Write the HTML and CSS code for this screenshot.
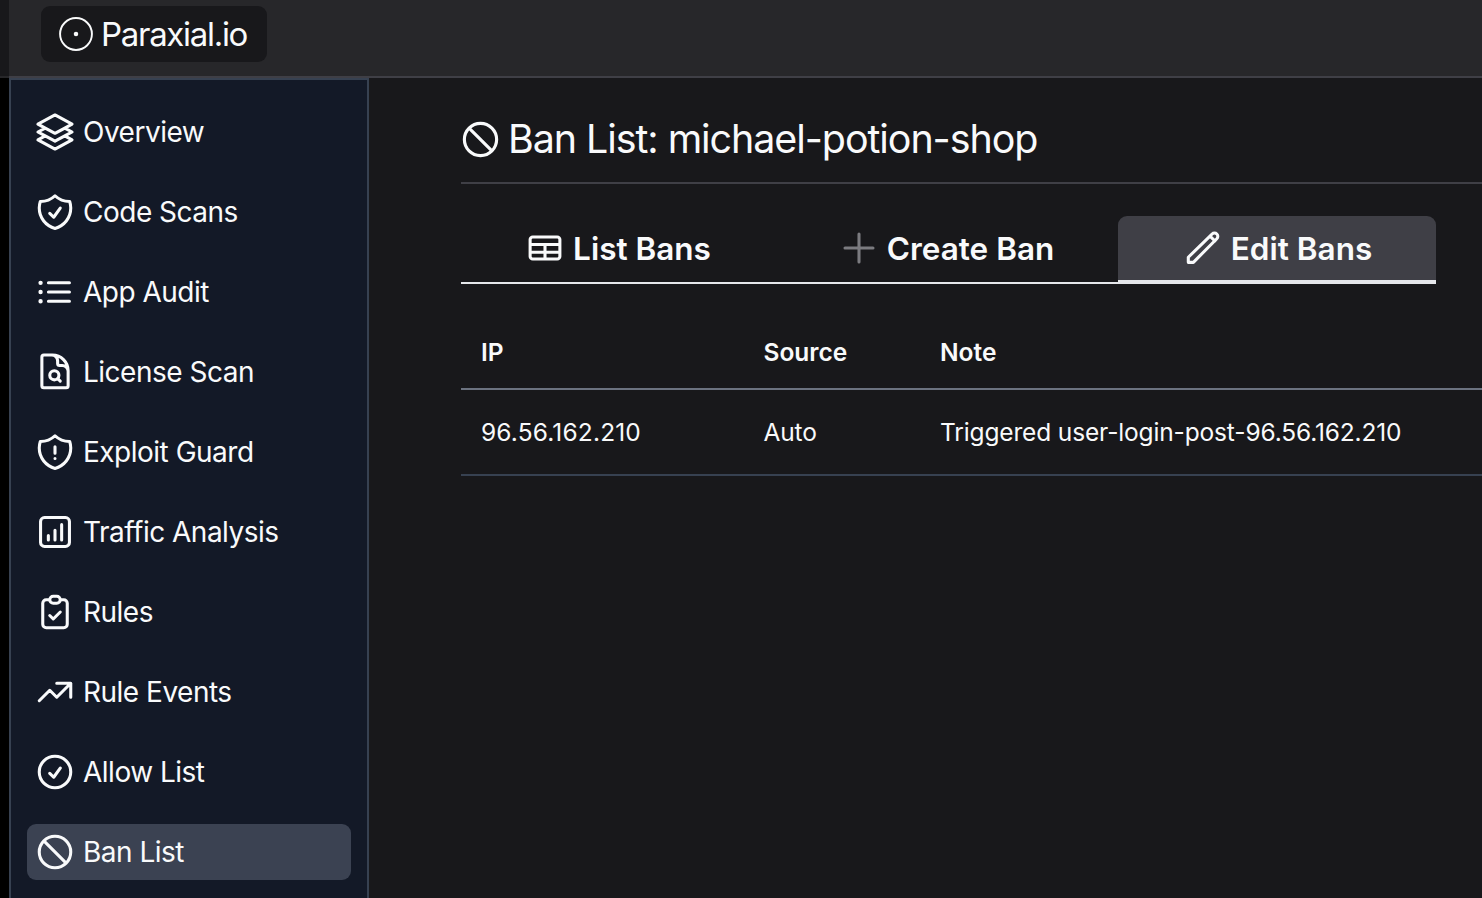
FILE: index.html
```html
<!DOCTYPE html>
<html lang="en">
<head>
<meta charset="utf-8">
<title>Ban List: michael-potion-shop</title>
<link rel="stylesheet" href="styles.css">
</head>
<body>
<header class="topbar">
  <div class="topbar-strip"></div>
  <div class="topbar-main">
    <a class="logo" href="#">
      <svg class="icon" viewBox="0 0 24 24"><circle cx="12" cy="12" r="9.1" fill="none" stroke="currentColor" stroke-width="1.1"/><circle cx="12" cy="12" r="1.3" fill="currentColor" stroke="none"/></svg>
      <span class="logo-text">Paraxial.io</span>
    </a>
  </div>
</header>
<div class="shell">
  <div class="gutter"></div>
  <nav class="sidebar">
    <a class="nav-item" href="#"><svg class="icon" viewBox="0 0 24 24"><path d="M6.429 9.75L2.25 12l4.179 2.25m0-4.5l5.571 3 5.571-3m-11.142 0L2.25 7.5 12 2.25l9.75 5.25-4.179 2.25m0 0L21.75 12l-4.179 2.25m0 0l4.179 2.25L12 21.75 2.25 16.5l4.179-2.25m11.142 0l-5.571 3-5.571-3"/></svg><span>Overview</span></a>
    <a class="nav-item" href="#"><svg class="icon" viewBox="0 0 24 24"><path d="M9 12.75L11.25 15 15 9.75m-3-7.036A11.959 11.959 0 013.598 6 11.99 11.99 0 003 9.749c0 5.592 3.824 10.29 9 11.623 5.176-1.332 9-6.03 9-11.622 0-1.31-.21-2.571-.598-3.751h-.152c-3.196 0-6.1-1.248-8.25-3.285z"/></svg><span>Code Scans</span></a>
    <a class="nav-item" href="#"><svg class="icon" viewBox="0 0 24 24"><path d="M8.25 6.75h12M8.25 12h12m-12 5.25h12M3.75 6.75h.007v.008H3.75V6.75zm.375 0a.375.375 0 11-.75 0 .375.375 0 01.75 0zM3.75 12h.007v.008H3.75V12zm.375 0a.375.375 0 11-.75 0 .375.375 0 01.75 0zm-.375 5.25h.007v.008H3.75v-.008zm.375 0a.375.375 0 11-.75 0 .375.375 0 01.75 0z"/></svg><span>App Audit</span></a>
    <a class="nav-item" href="#"><svg class="icon" viewBox="0 0 24 24"><path d="M19.5 14.25v-2.625a3.375 3.375 0 00-3.375-3.375h-1.5A1.125 1.125 0 0113.5 7.125v-1.5a3.375 3.375 0 00-3.375-3.375H8.25m5.231 13.481L15 17.25m-4.5-15H5.625c-.621 0-1.125.504-1.125 1.125v16.5c0 .621.504 1.125 1.125 1.125h12.75c.621 0 1.125-.504 1.125-1.125V11.25a9 9 0 00-9-9zm3.75 11.625a2.625 2.625 0 11-5.25 0 2.625 2.625 0 015.25 0z"/></svg><span>License Scan</span></a>
    <a class="nav-item" href="#"><svg class="icon" viewBox="0 0 24 24"><path d="M12 9v3.75m0-10.036A11.959 11.959 0 013.598 6 11.99 11.99 0 003 9.75c0 5.592 3.824 10.29 9 11.622 5.176-1.332 9-6.03 9-11.622 0-1.31-.21-2.57-.598-3.75h-.152c-3.196 0-6.1-1.249-8.25-3.286zm0 13.036h.008v.008H12v-.008z"/></svg><span>Exploit Guard</span></a>
    <a class="nav-item" href="#"><svg class="icon" viewBox="0 0 24 24"><path d="M8.2 14v2.5M12 11v5.5M15.8 7.8v8.7M6 20.25h12A2.25 2.25 0 0020.25 18V6A2.25 2.25 0 0018 3.75H6A2.25 2.25 0 003.75 6v12A2.25 2.25 0 006 20.25z"/></svg><span>Traffic Analysis</span></a>
    <a class="nav-item" href="#"><svg class="icon" viewBox="0 0 24 24"><path d="M9 5H7a2 2 0 00-2 2v12a2 2 0 002 2h10a2 2 0 002-2V7a2 2 0 00-2-2h-2M9 5a2 2 0 002 2h2a2 2 0 002-2M9 5a2 2 0 012-2h2a2 2 0 012 2m-6 9l2 2 4-4"/></svg><span>Rules</span></a>
    <a class="nav-item" href="#"><svg class="icon" viewBox="0 0 24 24"><path d="M13 7h8m0 0v8m0-8l-8 8-4-4-6 6"/></svg><span>Rule Events</span></a>
    <a class="nav-item" href="#"><svg class="icon" viewBox="0 0 24 24"><path d="M9 12.75L11.25 15 15 9.75M21 12a9 9 0 11-18 0 9 9 0 0118 0z"/></svg><span>Allow List</span></a>
    <a class="nav-item nav-item-active" href="#"><svg class="icon" viewBox="0 0 24 24"><path d="M18.364 18.364A9 9 0 005.636 5.636m12.728 12.728A9 9 0 015.636 5.636m12.728 12.728L5.636 5.636"/></svg><span>Ban List</span></a>
  </nav>
  <main class="content">
    <h1 class="title"><svg class="icon title-icon" viewBox="0 0 24 24"><path d="M18.364 18.364A9 9 0 005.636 5.636m12.728 12.728A9 9 0 015.636 5.636m12.728 12.728L5.636 5.636"/></svg><span>Ban List: michael-potion-shop</span></h1>
    <div class="tabs">
      <a class="tab" href="#"><svg class="icon" viewBox="0 0 24 24"><path d="M5 5.7h14A1.5 1.5 0 0120.5 7.2v9.6a1.5 1.5 0 01-1.5 1.5H5a1.5 1.5 0 01-1.5-1.5V7.2A1.5 1.5 0 015 5.7zM3.5 10h17M3.5 14.4h17M12 10v8.3"/></svg><span>List Bans</span></a>
      <a class="tab" href="#"><svg class="icon icon-muted" viewBox="0 0 24 24"><path d="M12 4v16m8-8H4"/></svg><span>Create Ban</span></a>
      <a class="tab tab-active" href="#"><svg class="icon" viewBox="0 0 24 24"><path d="M16 5.2l1.2-1.2a1.9 1.9 0 012.7 0 1.9 1.9 0 010 2.7L6.5 20.2H3.6v-2.9L16 5.2zm0 0l2.8 2.8"/></svg><span>Edit Bans</span></a>
    </div>
    <table class="bans">
      <colgroup><col class="col-ip"><col class="col-source"><col></colgroup>
      <thead><tr><th>IP</th><th>Source</th><th>Note</th></tr></thead>
      <tbody><tr><td class="cell-ip">96.56.162.210</td><td>Auto</td><td>Triggered user-login-post-96.56.162.210</td></tr></tbody>
    </table>
  </main>
</div>
</body>
</html>
```
FILE: styles.css
```css
* { box-sizing: border-box; }
html, body { margin: 0; height: 100%; }
body {
  background: #18181b;
  color: #f9fafb;
  font-family: Inter, "Liberation Sans", sans-serif;
  overflow: hidden;
}
a { color: inherit; text-decoration: none; }
.icon {
  width: 42px;
  height: 42px;
  flex: none;
  fill: none;
  stroke: currentColor;
  stroke-width: 1.75;
  stroke-linecap: round;
  stroke-linejoin: round;
}
.icon-muted { color: #7b7b80; }

.topbar { display: flex; height: 78px; }
.topbar-strip { width: 9px; background: #18181b; border-bottom: 2px solid #27272a; }
.topbar-main {
  flex: 1;
  background: #27272a;
  border-bottom: 2px solid #3f3f46;
  padding: 6px 0 0 32px;
}
.logo {
  display: flex;
  align-items: center;
  gap: 4px;
  width: 226px;
  height: 56px;
  padding-left: 14px;
  background: #18181b;
  border-radius: 9px;
}
.logo-text { font-size: 33px; letter-spacing: -1.3px; }

.shell { display: flex; height: 820px; }
.gutter { width: 9px; background: #000; }
.sidebar {
  width: 360px;
  background: #131927;
  border: 2px solid #374151;
  border-bottom: 0;
  padding: 24px 16px 0;
  display: flex;
  flex-direction: column;
  gap: 24px;
}
.nav-item {
  display: flex;
  align-items: center;
  gap: 7px;
  height: 56px;
  padding-left: 7px;
  border-radius: 9px;
  font-size: 28px;
  letter-spacing: -0.5px;
}
.nav-item-active { background: #3b4252; }

.content { flex: 1; min-width: 0; padding: 39px 0 0 92px; }
.title {
  display: flex;
  align-items: center;
  gap: 6px;
  height: 67px;
  margin: 0;
  border-bottom: 2px solid #3f3f46;
  padding-bottom: 21px;
  font-size: 39.4px;
  font-weight: 400;
  letter-spacing: -1.05px;
}
.title-icon { width: 43px; height: 43px; margin-left: -2px; }
.tabs {
  display: grid;
  grid-template-columns: 313px 344px 318px;
  width: 975px;
  height: 68px;
  margin-top: 32px;
}
.tab {
  display: flex;
  align-items: center;
  justify-content: center;
  gap: 7px;
  padding-bottom: 2px;
  border-bottom: 2px solid #e5e7eb;
  font-size: 31.5px;
  font-weight: 600;
}
.tab-active {
  padding-bottom: 0;
  background: #3f3f46;
  border-bottom-width: 4px;
  border-radius: 9px 9px 0 0;
}
.bans {
  width: 100%;
  margin-top: 31px;
  border-collapse: collapse;
  table-layout: fixed;
  font-size: 24.5px;
}
.col-ip { width: 282.5px; }
.col-source { width: 176.5px; }
.bans th {
  height: 74px;
  padding: 0 0 0 20px;
  text-align: left;
  font-weight: 600;
  border-bottom: 2px solid #6b7280;
}
.bans td {
  height: 86px;
  padding: 0 0 0 20px;
  border-bottom: 2px solid #374151;
  letter-spacing: -0.15px;
}
.bans .cell-ip { letter-spacing: 0.15px; }
```
